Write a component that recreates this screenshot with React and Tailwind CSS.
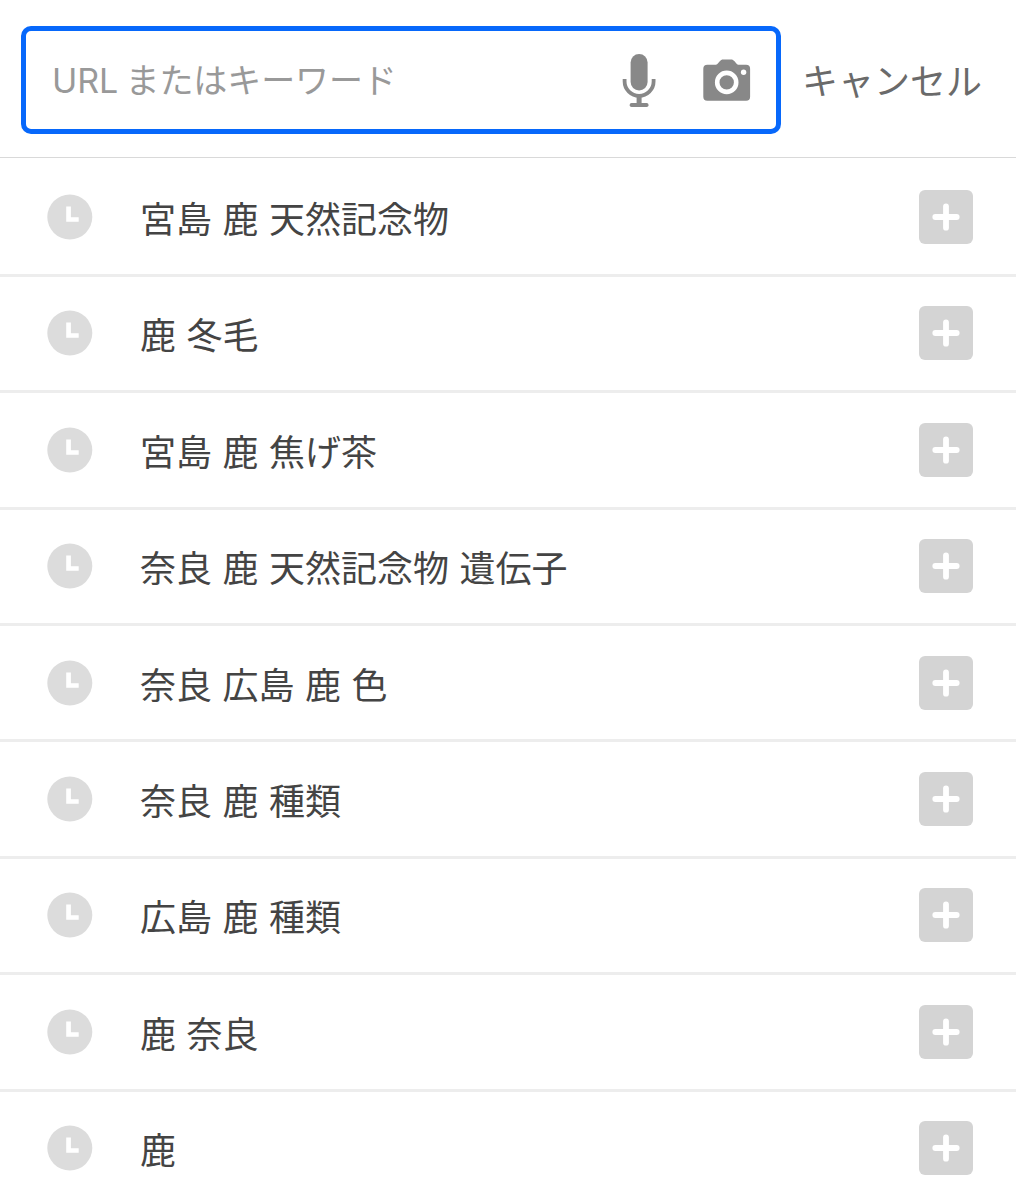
import React, { useState } from 'react';

const initialHistory = [
  '宮島 鹿 天然記念物',
  '鹿 冬毛',
  '宮島 鹿 焦げ茶',
  '奈良 鹿 天然記念物 遺伝子',
  '奈良 広島 鹿 色',
  '奈良 鹿 種類',
  '広島 鹿 種類',
  '鹿 奈良',
  '鹿',
];

const MicIcon = () => (
  <svg className="w-[34px] h-[54px]" viewBox="0 0 34 54" fill="none">
    <rect x="8.6" y="1" width="17" height="36.6" rx="8.5" fill="#888888" />
    <path d="M2.6 26v2.6a14.5 14.3 0 0 0 29 0V26" stroke="#888888" strokeWidth="3.8" />
    <path d="M17.1 42v9" stroke="#888888" strokeWidth="5" />
    <rect x="7.7" y="50" width="18.8" height="4" rx="1.8" fill="#888888" />
  </svg>
);

const CameraIcon = () => (
  <svg className="w-[48px] h-[42px]" viewBox="0 0 48 42">
    <path
      d="M4.3 5.8h7.9c1 0 1.7-.3 2.4-1.1l2.4-2.6C17.9.9 18.7.4 20 .4h8.2c1.3 0 2.200.5 3.100 1.700l2.300 2.600c.7.8 1.300 1.100 2.300 1.100h7.200a4 4 0 0 1 4 4v28a4 4 0 0 1-4 4H4.300a4 4 0 0 1-4-4v-28a4 4 0 0 1 4-4z"
      fill="#888888"
    />
    <circle cx="23.7" cy="23.4" r="9.5" fill="none" stroke="#ffffff" strokeWidth="4.600" />
    <circle cx="40.600" cy="13.2" r="2.7" fill="#ffffff" />
  </svg>
);

const ClockIcon = () => (
  <svg className="w-[46px] h-[46px] shrink-0" viewBox="0 0 46 46">
    <circle cx="22.8" cy="23" r="22.5" fill="#dcdcdc" />
    <path d="M19.2 12.5h4.7v10.7h7.8v4.6H19.2z" fill="#ffffff" />
  </svg>
);

const PlusIcon = () => (
  <svg className="w-[28px] h-[28px]" viewBox="0 0 28 28">
    <path d="M14 3.3v21.4M3.3 14h21.4" stroke="#ffffff" strokeWidth="5.800" strokeLinecap="round" />
  </svg>
);

const App = () => {
  const [query, setQuery] = useState('');

  return (
    <div className="h-[1200px] w-[1016px] overflow-hidden bg-white font-['Noto_Sans_CJK_JP',sans-serif]">
      {/* Search bar */}
      <header className="flex h-[158px] items-start border-b border-[#d9d9d9] pt-[26px] pl-[21px]">
        <div className="flex h-[108px] w-[760px] items-center rounded-[10px] border-5 border-[#0768fb] pr-[25px] pl-[26px]">
          <input
            value={query}
            onChange={(e) => setQuery(e.target.value)}
            placeholder="URL またはキーワード"
            className="min-w-0 flex-1 bg-transparent font-['Inter','Noto_Sans_CJK_JP',sans-serif] text-[34px] tracking-[-0.1px] [word-spacing:-2px] text-[#444444] outline-none placeholder:text-[#999999]"
          />
          <button className="mr-[47px]" aria-label="音声検索">
            <MicIcon />
          </button>
          <button aria-label="カメラ検索">
            <CameraIcon />
          </button>
        </div>
        <button
          className="ml-[21px] h-[105px] text-[36px] whitespace-nowrap text-[#6a6a6a]"
          onClick={() => setQuery('')}
        >
          キャンセル
        </button>
      </header>

      {/* Search history */}
      <ul className="pt-[2.4px]">
        {initialHistory.map((item) => (
          <li
            key={item}
            className="flex h-[116.4px] items-center border-b-3 border-[#ededed] pr-[43px] pl-[47px]"
          >
            <ClockIcon />
            <span className="ml-[47px] flex-1 text-[36px] leading-[54px] [word-spacing:2.4px] text-[#444444]">
              {item}
            </span>
            <button
              className="flex h-[54px] w-[54px] items-center justify-center rounded-[6px] bg-[#d4d4d4]"
              aria-label="追加"
              onClick={() => setQuery(item)}
            >
              <PlusIcon />
            </button>
          </li>
        ))}
      </ul>
    </div>
  );
};

export default App;
